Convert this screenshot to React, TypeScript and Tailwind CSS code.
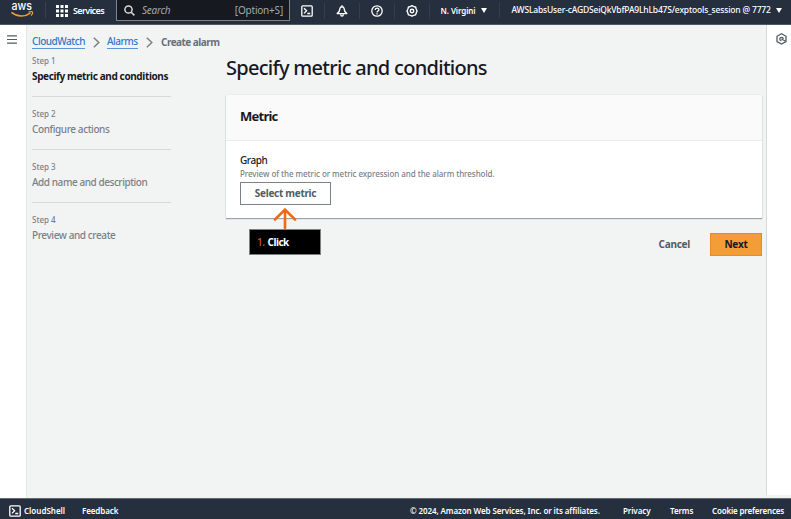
import React from "react";

const Terminal = ({ className = "" }: { className?: string }) => (
  <svg className={className} viewBox="0 0 12 12" fill="none" stroke="currentColor" strokeWidth="1.3">
    <rect x="0.8" y="0.8" width="10.4" height="10.4" rx="1" />
    <path d="M3 3.2 5.6 5.8 3 8.4M6.3 8.5h2.9" />
  </svg>
);

const Bell = () => (
  <svg className="h-3 w-3" viewBox="0 0 12 12" fill="none" stroke="currentColor" strokeWidth="1.4" strokeLinejoin="round">
    <path d="M6 .2v1.600M6 1.800C4.500 1.800 3.800 3 3.800 4.300c0 2-1.100 3-2.600 4.300h9.600C9.300 7.300 8.200 6.300 8.200 4.300 8.200 3 7.500 1.800 6 1.800Z" />
    <path d="M4.700 9.200c0 2.600 2.600 2.600 2.600 0" />
  </svg>
);

const Help = () => (
  <svg className="h-3 w-3" viewBox="0 0 12 12" fill="none" stroke="currentColor" strokeWidth="1.3">
    <circle cx="6" cy="6" r="5.2" />
    <path d="M4.200 4.900C4.200 2.500 7.900 2.600 7.900 4.700 7.900 6 6 5.900 6 7.400M6 8.200v1.300" />
  </svg>
);

const Gear = () => (
  <svg className="h-3 w-3" viewBox="0 0 13 13" fill="none" stroke="currentColor" strokeWidth="1.5" strokeLinejoin="round">
    <path d="m5.500 1.300 1-.6 1 .6 1.800.7 1.200.2.300 1.300.6 1.600.6 1.400-.6 1.300-.6 1.700-.4 1.200-1.300.3-1.600.6-1 .6-1-.6-1.700-.6-1.200-.3-.3-1.200-.6-1.700-.7-1.300.7-1.400.6-1.600.3-1.300 1.200-.2Z" />
    <circle cx="6.500" cy="6.500" r="1.900" />
  </svg>
);

const AwsLogo = () => (
  <svg className="h-[17px] w-6 overflow-visible" viewBox="0 0 24 17">
    <text x="0.500" y="9.300" textLength="20.500" lengthAdjust="spacingAndGlyphs" fill="#fff" fontSize="11.800" fontWeight="500" fontFamily="Inter, sans-serif">aws</text>
    <path d="M.4 11.400c5.800 4.700 13.500 4.700 19 .8" fill="none" stroke="#f29b38" strokeWidth="1.500" />
    <path d="M17.600 11.100c2-.7 3.800-.6 4 0 .2.900-.5 2.500-1.500 3.400" fill="none" stroke="#f29b38" strokeWidth="1.200" />
  </svg>
);

const Chevron = () => (
  <svg className="h-[11px] w-[7px] shrink-0" viewBox="0 0 7 11" fill="none" stroke="#7b8288" strokeWidth="1.500">
    <path d="m.8.7 5 4.800-5 4.800" />
  </svg>
);

const Caret = () => (
  <svg className="h-[5px] w-[6px] shrink-0" viewBox="0 0 6 5" fill="currentColor">
    <path d="M0 0h6L3 5Z" />
  </svg>
);

const tools = [<Terminal className="h-3 w-3" />, <Bell />, <Help />, <Gear />];

const steps = [
  { label: "Specify metric and conditions", style: "font-bold text-[#16191f] tracking-[-0.38px]" },
  { label: "Configure actions", style: "font-medium text-[#7a8188] tracking-[-0.4px]" },
  { label: "Add name and description", style: "font-medium text-[#7a8188] tracking-[-0.44px]" },
  { label: "Preview and create", style: "font-medium text-[#7a8188] tracking-[-0.4px]" },
];

function Header() {
  return (
    <header className="flex h-[25px] shrink-0 border-b border-[#515965] bg-[#252f3e] text-white">
      <div className="flex w-[45px] shrink-0 pl-[11px] pt-px"><AwsLogo /></div>
      <div className="h-4 w-px mt-[2px] bg-[#394252]" />
      <div className="flex h-[21px] w-[70px] shrink-0 items-center pl-[10px]">
        <svg className="h-3 w-3 shrink-0" viewBox="0 0 12 12" fill="currentColor">
          {[0, 4.5, 9].map((y) => [0, 4.5, 9].map((x) => <rect key={`${x}-${y}`} x={x} y={y} width="3" height="3" />))}
        </svg>
        <span className="ml-[5px] text-[9px] font-semibold tracking-[-0.6px]">Services</span>
      </div>
      <div className="flex h-[21px] w-[174px] shrink-0 items-center border border-t-0 border-[#7d858c] bg-[#16191f] pl-[7px] pr-[6px] text-[10px] text-[#a2a9ae]">
        <svg className="h-[11px] w-[11px] shrink-0" viewBox="0 0 11 11" fill="none" stroke="#d5dbdb" strokeWidth="1.500">
          <circle cx="4.500" cy="4.500" r="3.600" /><path d="m7.200 7.200 3.200 3.200" />
        </svg>
        <span className="ml-[7px] italic tracking-[-0.25px]">Search</span>
        <span className="ml-auto tracking-[-0.2px]">[Option+S]</span>
      </div>
      <div className="flex h-[21px] shrink-0 items-center">
        {tools.map((icon, i) => (
          <React.Fragment key={i}>
            <div className="flex w-[33.9px] items-center justify-center">{icon}</div>
            <div className="h-4 w-px bg-[#333d4c]" />
          </React.Fragment>
        ))}
      </div>
      <div className="flex h-[21px] w-[57px] shrink-0 items-center justify-between pl-[11px] text-[8px] font-semibold">
        <span className="whitespace-nowrap tracking-[-0.1px]">N. Virgini</span><Caret />
      </div>
      <div className="ml-3 mt-[2px] h-4 w-px bg-[#333d4c]" />
      <div className="flex h-[21px] flex-1 items-center justify-between pl-[12px] pr-[9px] text-[8.5px] font-medium">
        <span className="whitespace-nowrap tracking-[-0.18px]">AWSLabsUser-cAGDSeiQkVbfPA9LhLb47S/exptools_session @ 7772</span><Caret />
      </div>
    </header>
  );
}

function Sidebar() {
  return (
    <nav className="w-[139px] shrink-0">
      {steps.map((step, i) => (
        <div key={step.label} className={i < 3 ? "h-[53px]" : ""}>
          <div className="h-[14px] text-[8px] font-medium leading-[14px] text-[#7a8188]">Step {i + 1}</div>
          <div className={`h-[17px] whitespace-nowrap text-[10px] leading-[17px] ${step.style}`}>{step.label}</div>
          {i < 3 && <div className="mt-[11px] h-px bg-[#d5dbdb]" />}
        </div>
      ))}
    </nav>
  );
}

function Content() {
  return (
    <section className="ml-[55px] w-[536px] shrink-0">
      <h1 className="h-[41px] whitespace-nowrap text-[20px] font-medium leading-[28px] tracking-[-0.71px] text-[#16191f]">Specify metric and conditions</h1>
      <div className="relative h-[123px] bg-white shadow-[0_1px_1px_#9da3a7,0_0_1px_#c8cecf]">
        <h2 className="h-[46px] border-b border-[#eaeded] bg-[#fafafa] pl-[14px] text-[13px] font-bold leading-[43px] tracking-[-0.75px] text-[#16191f]">Metric</h2>
        <div className="pl-[14px] pt-3">
          <div className="h-[14px] text-[10px] font-medium leading-[14px] tracking-[-0.4px] text-[#16191f]">Graph</div>
          <div className="h-[15px] whitespace-nowrap text-[8px] font-medium leading-[14px] tracking-[-0.06px] text-[#7a8188]">Preview of the metric or metric expression and the alarm threshold.</div>
          <button className="block h-[23px] w-[91px] border border-[#7b8288] bg-white text-[10px] font-bold leading-[21px] tracking-[-0.3px] text-[#545b64]">Select metric</button>
        </div>
        <svg className="absolute left-[47px] top-[112px] h-[22px] w-6" viewBox="0 0 24 22" fill="none" stroke="#ed6b16" strokeWidth="2.600" strokeLinecap="round">
          <path d="M12 21V2.500M2 12.500 12 2.500l10 10" />
        </svg>
        <div className="absolute left-[23px] top-[133.5px] h-[26px] w-[72px] border border-[#7d8080] bg-black pl-[7px] text-[10px] leading-6 tracking-[-0.5px] text-white">
          <span className="font-medium text-[#d65a14]">1.</span> <b className="ml-px">Click</b>
        </div>
      </div>
      <div className="mt-[15px] flex items-center justify-end text-[10px] font-bold tracking-[-0.25px]">
        <button className="mr-5 text-[#545b64]">Cancel</button>
        <button className="h-[23px] w-[52px] border border-[#e58d25] bg-[#f29d38] text-[#16191f]">Next</button>
      </div>
    </section>
  );
}

export default function App() {
  return (
    <div className="flex h-[519px] w-[791px] flex-col overflow-hidden bg-[#f2f3f3] font-['Noto_Sans',sans-serif]">
      <Header />
      <div className="flex flex-1">
        <aside className="w-[26px] shrink-0 bg-white pl-[7px] pt-[10px]">
          <svg className="h-[9px] w-[10px]" viewBox="0 0 10 9" stroke="#545b64" strokeWidth="1.200"><path d="M0 .9h10M0 4.500h10M0 8.100h10" /></svg>
        </aside>
        <main className="w-[740px] shrink-0 border-l border-[#e3e6e6] pl-[5px] pt-[10px]">
          <div className="flex h-[14px] items-center whitespace-nowrap text-[10px] font-medium tracking-[-0.46px] text-[#3178c6]">
            <a className="w-[53px] border-b border-[#5c97d3] leading-[13px]">CloudWatch</a>
            <span className="ml-2 mr-[7px] flex"><Chevron /></span>
            <a className="w-[31px] border-b border-[#5c97d3] leading-[13px]">Alarms</a>
            <span className="ml-2 mr-2 flex"><Chevron /></span>
            <span className="font-bold tracking-[-0.53px] text-[#687078]">Create alarm</span>
          </div>
          <div className="flex pt-[5px]"><Sidebar /><Content /></div>
        </main>
        <aside className="mb-[3px] flex-1 border-l border-[#d5dbdb] bg-white pl-[9px] pt-2">
          <svg className="h-3 w-[11px]" viewBox="0 0 11 12" fill="none" stroke="#545b64" strokeWidth="1.300"><path d="m5.500.8 4.500 2.500v5.200l-4.500 2.600L1 8.500V3.300Z" /><path d="M7.200 6a1.700 1.700 0 1 0-1.700 1.700M5.500 6 9.600 8.300" /></svg>
        </aside>
      </div>
      <footer className="flex h-[21px] shrink-0 items-center border-t border-[#626a74] bg-[#252f3e] pl-[9px] pr-[7px] pt-[3px] text-[8px] font-semibold tracking-[-0.1px] text-white">
        <Terminal className="h-3 w-3" />
        <span className="ml-[3px] w-[58px] tracking-normal">CloudShell</span>
        <span>Feedback</span>
        <span className="ml-auto w-[213px] whitespace-nowrap">© 2024, Amazon Web Services, Inc. or its affiliates.</span>
        <span className="w-[47px]">Privacy</span>
        <span className="w-[42px]">Terms</span>
        <span className="w-[72px] whitespace-nowrap tracking-[-0.17px]">Cookie preferences</span>
      </footer>
    </div>
  );
}
